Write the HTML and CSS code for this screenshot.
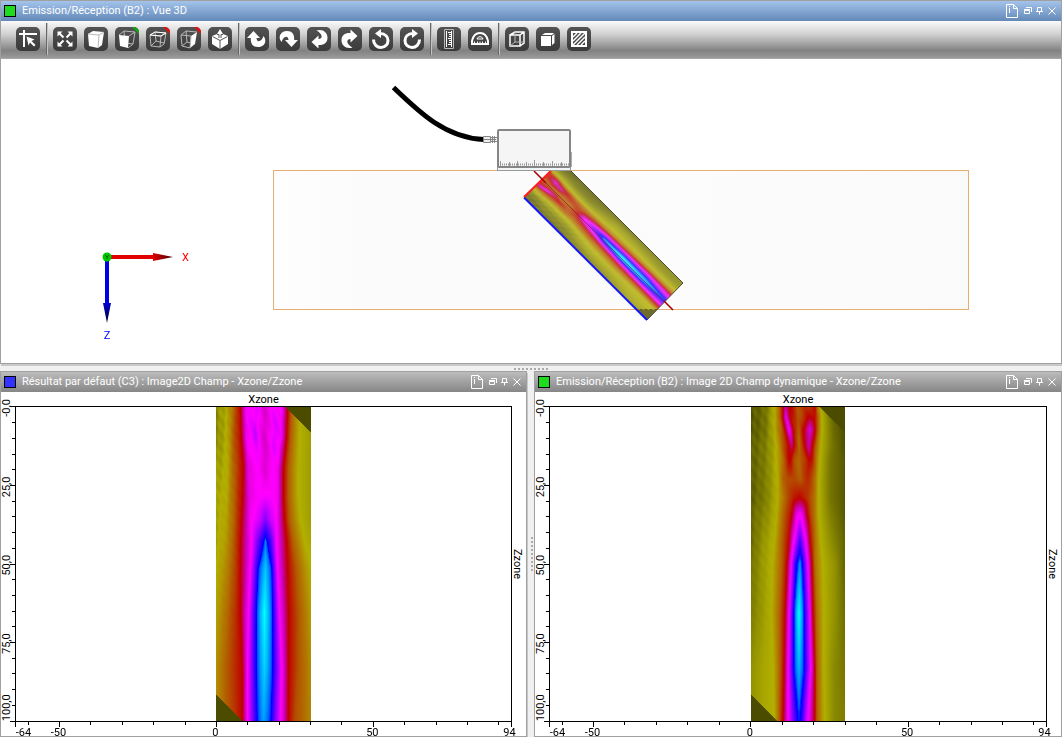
FILE: index.html
```html
<!DOCTYPE html>
<html lang="fr">
<head>
<meta charset="utf-8">
<title>Vue 3D</title>
<link rel="stylesheet" href="styles.css">
</head>
<body>
<svg class="defs" aria-hidden="true">
  <symbol id="w-info" viewBox="0 0 12 14"><path d="M.5.5h7l4 4v9H.5zM7.5.5v4h4M3.500 2v1M3.500 4v5"/></symbol>
  <symbol id="w-restore" viewBox="0 0 8 8"><path d="M.5 3.500h5v3h-5zM0 2.500h6M2 .5h5.500v4.500"/></symbol>
  <symbol id="w-pin" viewBox="0 0 8 8"><path d="M1.500.5h4v4h-4zM0 4.500h7M3.500 4.500v3"/></symbol>
  <symbol id="w-close" viewBox="0 0 8 8"><path d="M.5.5l7 7M7.500.5l-7 7"/></symbol>
</svg>
<main class="workspace">
  <section class="panel panel-scene">
    <header class="titlebar active">
      <span class="swatch green"></span><h1 class="title">Emission/Réception (B2) : Vue 3D</h1>
      <div class="controls">
        <button class="ctl info" aria-label="Info"><svg><use href="#w-info"/></svg></button>
        <button class="ctl" aria-label="Restaurer"><svg><use href="#w-restore"/></svg></button>
        <button class="ctl" aria-label="Épingler"><svg><use href="#w-pin"/></svg></button>
        <button class="ctl" aria-label="Fermer"><svg><use href="#w-close"/></svg></button>
      </div>
    </header>
    <div class="toolbar">
      <div class="group">
        <button class="tool" aria-label="Sélection"><svg viewBox="0 0 24 24"><path class="l2" d="M3 7h18M8 3v17"/><path class="f" d="M10.500 9.500l8 3-3 1.500 4 4-1.500 1.500-4-4-1.500 3z"/></svg></button>
      </div>
      <div class="group">
        <button class="tool" aria-label="Ajuster"><svg viewBox="0 0 24 24"><path class="l2" d="M6 6l4.500 4.500M18 6l-4.500 4.500M6 18l4.500-4.500M18 18l-4.500-4.500"/><path class="f" d="M4.500 4.500h5l-5 5zM19.500 4.500v5l-5-5zM4.500 19.500v-5l5 5zM19.500 19.500h-5l5-5z"/></svg></button>
        <button class="tool" aria-label="Vue pleine"><svg viewBox="0 0 24 24"><path class="f" d="M4 7l5-3 11 1-2 13-4 3-9-2z"/><path class="g" d="M4 7l11 1 5-3M15 8l-1 13"/></svg></button>
        <button class="tool" aria-label="Vue de face"><svg viewBox="0 0 24 24"><path class="corner-g" d="M17 0h4l3 3v4z"/><path class="g" d="M4 8l5-4 11 1-2 12-5 4M14 9l6-4M9 4l1 12 8 1"/><path class="f" d="M4 8l10 1-1 12-8-2z"/></svg></button>
        <button class="tool" aria-label="Vue de dessus"><svg viewBox="0 0 24 24"><path class="corner-r" d="M17 0h4l3 3v4z"/><path class="g" d="M4 8l11 1-1 11-9-1zM4 8l5-3 11 1-5 3M20 6l-2 11-4 3M9 5l1 9 8 2M10 14l-5 5"/><path class="l1" d="M4 8l5-3 11 1-5 3z"/></svg></button>
        <button class="tool" aria-label="Vue de côté"><svg viewBox="0 0 24 24"><path class="corner-r" d="M17 0h4l3 3v4z"/><path class="f" d="M14 9l6-4-2 12-5 4z"/><path class="g" d="M4 8l10 1-1 12-8-2zM4 8l5-4 11 1M9 4l1 11 4 1M10 15l-5 4"/></svg></button>
        <button class="tool" aria-label="Vue isométrique"><svg viewBox="0 0 24 24"><path class="f" d="M4 9l5-2 3-5 3 5 5 2v8l-8 5-8-5z"/><path class="d" d="M4.500 9.500l7.500 4 7.500-4M12 13.500V22M9 7.500h2V11M15 7.500h-2V11"/></svg></button>
      </div>
      <div class="group">
        <button class="tool" aria-label="Pivoter vers le haut"><svg viewBox="0 0 24 24"><path class="f" d="M2 11l6.500-7 6.500 7h-3.500c.4 5 5 4 7-2 4 5 1 11-5.500 11-5 0-7.500-3-7.200-9z"/></svg></button>
        <button class="tool" aria-label="Pivoter vers le bas"><svg viewBox="0 0 24 24"><path class="f" d="M22 13l-6.500 7L9 13h3.500c-.4-5-5-4-7 2-4-5-1-11 5.500-11 5 0 7.500 3 7.200 9z"/></svg></button>
        <button class="tool" aria-label="Pivoter à gauche"><svg viewBox="0 0 24 24"><path class="f" d="M11.500 21.500l-7-6.500 7-6.500V12c5-.4 4-5-2-8.500 6-2 11 2 11 7 0 5-3 7.700-9 7.500z"/></svg></button>
        <button class="tool" aria-label="Pivoter à droite"><svg viewBox="0 0 24 24"><path class="f" d="M12.500 2.500l7 6.500-7 6.500V12c-5 .4-4 5 2 8.500-6 2-11-2-11-7 0-5 3-7.700 9-7.500z"/></svg></button>
        <button class="tool" aria-label="Rotation antihoraire"><svg viewBox="0 0 24 24"><path class="l3" d="M11 6.500c11 0 10 14 1 14-4 0-7.500-3-7.500-8"/><path class="f" d="M12 2v9L6 6.500z"/></svg></button>
        <button class="tool" aria-label="Rotation horaire"><svg viewBox="0 0 24 24"><path class="l3" d="M13 6.500c-11 0-10 14-1 14 4 0 7.500-3 7.500-8"/><path class="f" d="M12 2v9l6-4.500z"/></svg></button>
      </div>
      <div class="group">
        <button class="tool" aria-label="Règle"><svg viewBox="0 0 24 24"><path class="g" d="M7.500 2.500h9v19h-9z"/><path class="l1" d="M9.500 4v16M14.500 4v16M11 5.500h3M12 7.500h2M12 9.500h2M11 11.500h3M12 13.500h2M12 15.500h2M11 17.500h3"/></svg></button>
        <button class="tool" aria-label="Rapporteur"><svg viewBox="0 0 24 24"><path class="l2" d="M4 17v-3c1-5 4-8 8-8s7 3 8 8v3z"/><path class="l1" d="M9 12c.5-3 5.500-3 6 0zM6.500 17v-2.500M9.500 17v-2.500M12 17v-2.500M14.500 17v-2.500M17.500 17v-2.500"/></svg></button>
      </div>
      <div class="group">
        <button class="tool" aria-label="Filaire"><svg viewBox="0 0 24 24"><path class="l1b" d="M5 8h10v11H5zM5 8l5-3h9v11l-4 3M15 8l4-3"/><path class="g" d="M10 5v10h9M10 15l-5 4"/></svg></button>
        <button class="tool" aria-label="Solide"><svg viewBox="0 0 24 24"><path class="f" d="M5 9h10v10H5zM6 8l3-2h9l-2 2zM16 9l2.500-2v9L16 18z"/></svg></button>
        <button class="tool" aria-label="Hachures"><svg viewBox="0 0 24 24"><path class="l2" d="M5 5h14v14H5z"/><path class="l1b" d="M6 10l4-4M6 14l8-8M6 18l12-12M10 18l8-8M14 18l4-4"/></svg></button>
      </div>
    </div>
    <div class="scene">
      <svg class="scene-svg" viewBox="1 59 1060 304">
        <defs>
          <linearGradient id="block"><stop offset="0" stop-color="#fefefe"/><stop offset=".15" stop-color="#fbfbfb"/><stop offset=".6" stop-color="#fcfcfc"/><stop offset="1" stop-color="#fafafa"/></linearGradient>
          <linearGradient id="red-cone"><stop offset="0" stop-color="#e00000"/><stop offset="1" stop-color="#400000"/></linearGradient>
          <linearGradient id="blue-cone" x2="0" y2="1"><stop offset="0" stop-color="#0000d0"/><stop offset="1" stop-color="#000030"/></linearGradient>
          <clipPath id="below-surface"><rect x="500" y="171" width="200" height="160"/></clipPath>
        </defs>
        <rect x="273.500" y="170.500" width="695" height="139" fill="url(#block)" stroke="#e6ad72"/>
        <g clip-path="url(#below-surface)">
          <foreignObject width="95" height="313" transform="matrix(.379 -.389 .393 .393 524 197)"><canvas class="beam" data-field="dynamic" width="95" height="313"></canvas></foreignObject>
        </g>
        <g fill="none">
          <path d="M571 171l112 112-36 37" stroke="#4b4a2b"/>
          <path d="M524 197.500l123 122.500" stroke="#1616ff" stroke-width="2"/>
          <path d="M524 197l27-26" stroke="#ff1c1c" stroke-width="2"/>
          <path d="M534 171l12 12M664 301l9 9" stroke="#a80000" stroke-width="1.500"/>
          <path d="M546 183l118 118" stroke="#801020" opacity=".6"/>
          <path d="M640 309.500h18" stroke="#5f5930" stroke-dasharray="2 3"/>
        </g>
        <path d="M393.500 87.500C420 113 446 138 484 139.500" fill="none" stroke="#000" stroke-width="5"/>
        <g stroke="#858585"><path d="M483.500 136.500h7v6h-7zM490.500 137.500h7v4h-7z" fill="#eee"/><path d="M484 139.500h12M492.500 136v7M494.500 136v7"/></g>
        <rect x="569" y="152" width="3" height="15" fill="#adadad"/>
        <rect x="497.500" y="166.500" width="73" height="4" fill="#f2f5f5" stroke="#999"/>
        <rect x="498" y="130" width="72" height="37" rx="1" fill="#f5f5f5" stroke="#858585" stroke-width="2"/>
        <g stroke="#999"><path d="M500 164.500h69" stroke-width="2" stroke-dasharray="1 1"/><path d="M500.500 161v5M517.500 161v5M534.500 160v6M552.500 161v5M509.500 162v4M526.500 162v4M543.500 162v4M561.500 162v4"/></g>
        <path d="M110 257h45" stroke="#e00000" stroke-width="4"/><path d="M153 253l20 4-20 4z" fill="url(#red-cone)"/>
        <path d="M107 260v44" stroke="#0000e8" stroke-width="4"/><path d="M103 303h8l-4 20z" fill="url(#blue-cone)"/>
        <circle cx="107" cy="257" r="4.500" fill="#00c800"/><path d="M105 255l2 2 2-2M107 257v2" fill="none" stroke="#006000"/>
        <text class="axis-x" x="185.500" y="261">X</text><text class="axis-z" x="107" y="339">Z</text>
      </svg>
    </div>
  </section>
  <div class="splitter horizontal"></div>
  <div class="results">
    <section class="panel">
      <header class="titlebar">
        <span class="swatch blue"></span><h2 class="title">Résultat par défaut (C3) : Image2D Champ - Xzone/Zzone</h2>
        <div class="controls">
          <button class="ctl info" aria-label="Info"><svg><use href="#w-info"/></svg></button>
          <button class="ctl" aria-label="Restaurer"><svg><use href="#w-restore"/></svg></button>
          <button class="ctl" aria-label="Épingler"><svg><use href="#w-pin"/></svg></button>
          <button class="ctl" aria-label="Fermer"><svg><use href="#w-close"/></svg></button>
        </div>
      </header>
      <div class="chart">
        <div class="name-x">Xzone</div>
        <svg class="scale-y"></svg>
        <div class="plot"><canvas class="map" data-field="static" width="95" height="313"></canvas></div>
        <div class="name-z">Zzone</div>
        <svg class="scale-x"></svg>
      </div>
    </section>
    <div class="splitter vertical"></div>
    <section class="panel">
      <header class="titlebar">
        <span class="swatch green"></span><h2 class="title">Emission/Réception (B2) : Image 2D Champ dynamique - Xzone/Zzone</h2>
        <div class="controls">
          <button class="ctl info" aria-label="Info"><svg><use href="#w-info"/></svg></button>
          <button class="ctl" aria-label="Restaurer"><svg><use href="#w-restore"/></svg></button>
          <button class="ctl" aria-label="Épingler"><svg><use href="#w-pin"/></svg></button>
          <button class="ctl" aria-label="Fermer"><svg><use href="#w-close"/></svg></button>
        </div>
      </header>
      <div class="chart">
        <div class="name-x">Xzone</div>
        <svg class="scale-y"></svg>
        <div class="plot"><canvas class="map" data-field="dynamic" width="95" height="313"></canvas></div>
        <div class="name-z">Zzone</div>
        <svg class="scale-x"></svg>
      </div>
    </section>
  </div>
</main>
<script src="app.js"></script>
</body>
</html>
```

FILE: styles.css
```css
*, ::before { box-sizing: border-box; }
body {
  margin: 0;
  background: #f0f0f0;
  color: #000;
  font: 11px/14px Tahoma, Roboto, "DejaVu Sans Condensed", sans-serif;
}
.defs { display: none; }
button { padding: 0; border: 0; background: none; color: inherit; }
.workspace {
  display: grid;
  grid-template-rows: minmax(0, 364fr) 7px minmax(0, 366fr);
  height: 100vh;
}
.results {
  display: grid;
  grid-template-columns: minmax(0, 527fr) 7px minmax(0, 528fr);
  min-height: 0;
}
.panel {
  display: flex;
  flex-direction: column;
  min-width: 0;
  min-height: 0;
  border: 1px solid #a0a0a0;
  background: #fff;
  box-shadow: 1px 2px 0 #c8c8c8;
}
.titlebar {
  display: flex;
  flex: none;
  align-items: center;
  height: 20px;
  padding: 0 5px 0 3px;
  background: linear-gradient(#bcbcbc, #868686);
  color: #fff;
}
.titlebar.active { background: linear-gradient(#a3c3ea, #6489b8); }
.swatch { width: 12px; height: 12px; border: 1px solid #000; }
.green { background: #1fdb1f; }
.blue { background: #3333ff; }
.title { flex: 1; margin: 0 0 0 6px; font-size: 11px; font-weight: 400; white-space: nowrap; }
.controls { display: flex; align-items: center; gap: 4px; }
.ctl { width: 8px; height: 8px; }
.ctl.info { width: 12px; height: 14px; margin-right: 2px; }
.ctl svg { display: block; width: 100%; height: 100%; fill: none; stroke: #fff; }
.toolbar {
  display: flex;
  flex: none;
  align-items: center;
  height: 38px;
  padding: 0 0 1px 15px;
  border-bottom: 1px solid #a8a8a8;
  background: linear-gradient(#fafafa, #d2d2d2 35%, #828282 80%, #9a9a9a);
}
.group { display: flex; align-items: center; gap: 7px; }
.group + .group { margin-left: 6px; }
.group + .group::before {
  width: 2px;
  height: 32px;
  margin-right: -2px;
  border-left: 1px solid #666;
  background: #c4c4c4;
  content: "";
}
.tool { width: 24px; height: 24px; border-radius: 5px; background: linear-gradient(#535353, #3a3a3a); overflow: hidden; }
.tool svg { display: block; width: 24px; height: 24px; fill: none; }
.f { fill: #fff; }
.g { stroke: #b8b8b8; }
.d { stroke: #555; }
.l1 { stroke: #fff; }
.l1b { stroke: #fff; stroke-width: 1.5; }
.l2 { stroke: #fff; stroke-width: 2; }
.l3 { stroke: #fff; stroke-width: 3; }
.corner-g { fill: #14a514; }
.corner-r { fill: #e01212; }
.scene { display: flex; flex: 1; min-height: 0; }
.scene-svg { width: 100%; height: 100%; }
.beam { display: block; opacity: .82; }
.axis-x { fill: #f00; text-anchor: middle; }
.axis-z { fill: #00f; text-anchor: middle; }
.splitter { display: flex; align-items: center; justify-content: center; }
.splitter::before {
  width: 34px;
  height: 2px;
  background: repeating-linear-gradient(90deg, #aaa 0 2px, transparent 2px 4px);
  content: "";
}
.splitter.horizontal { padding-top: 2px; }
.splitter.vertical { padding-left: 2px; }
.splitter.vertical::before {
  width: 2px;
  height: 34px;
  background: repeating-linear-gradient(#aaa 0 2px, transparent 2px 4px);
}
.chart {
  display: grid;
  flex: 1;
  grid-template-columns: 14px minmax(0, 1fr) 14px;
  grid-template-rows: 14px minmax(0, 1fr) 14px;
  min-height: 0;
}
.name-x { grid-area: 1 / 2; height: 14px; line-height: 16px; text-align: center; }
.scale-y { grid-area: 2 / 1; width: 14px; height: 100%; overflow: visible; }
.plot { grid-area: 2 / 2; display: flex; justify-content: center; border: 1px solid #000; }
.map { width: 19%; height: 100%; }
.name-z { grid-area: 2 / 3; padding-right: 3px; line-height: 12px; text-align: center; writing-mode: vertical-rl; }
.scale-x { grid-area: 3 / 2; width: 100%; height: 14px; overflow: visible; }
.scale-x line, .scale-y line { stroke: #000; shape-rendering: crispEdges; }
.scale-x text, .scale-y text { text-anchor: middle; }
```

FILE: app.js
```js
// Colour scale: the value of a cell is a position in this list.
const SCALE = [
  [76, 76, 0], [178, 176, 0], [178, 92, 0], [192, 0, 0], [200, 0, 176],
  [255, 0, 255], [128, 0, 255], [0, 0, 255], [0, 255, 255]
];

// Each profile is a depth, then pairs of position and value across the zone.
const FIELDS = {
  static: [
    [0, 0, .6, 10, 1, 18, 2, 24, 3, 30, 5, 40, 5.1, 48, 4.4, 56, 5, 65, 5, 71, 3, 75, 2, 84, 1, 95, .8],
    [30, 0, .6, 10, 1, 17, 2, 25, 3, 30, 4.8, 39, 5.4, 48, 4.3, 58, 5.3, 64, 5, 70, 3, 74, 2, 83, 1, 95, .8],
    [60, 0, .8, 10, 1, 18, 2, 27, 3, 32, 4.6, 42, 5, 49, 4.4, 56, 5, 61, 4.8, 67, 3, 72, 2, 82, 1, 95, .8],
    [90, 0, .9, 10, 1.1, 18, 2, 26, 3, 33, 4.6, 42, 5, 49, 5.1, 56, 5, 61, 4.8, 67, 3, 72, 2, 82, 1, 95, .8],
    [112, 0, .9, 10, 1.2, 18, 2, 25, 3, 34, 4.9, 44, 5.4, 49, 6, 54, 5.4, 60, 5, 68, 3, 73, 2, 84, 1, 95, .8],
    [133, 0, .9, 10, 1.3, 18, 2.1, 24, 3, 35, 5, 44, 6.5, 49, 7.2, 54, 6.5, 60, 5, 70, 3, 76, 2, 88, 1, 95, .9],
    [160, 0, 1, 10, 1.5, 18, 2.2, 24, 3, 34, 5, 42, 7, 49, 7.6, 55, 7, 61, 5, 71, 3, 80, 2, 91, 1.2, 95, 1],
    [205, 0, 1.2, 10, 1.8, 18, 2.4, 24, 3, 32, 5, 40, 7, 48, 8, 56, 7, 63, 5, 72, 3, 83, 2, 91, 1.5, 95, 1.2],
    [260, 0, 1.4, 10, 2, 18, 2.5, 26, 3, 31, 5, 40, 7, 48, 7.7, 56, 7, 65, 5, 72, 3, 82, 2.1, 90, 1.7, 95, 1.4],
    [313, 0, 1.4, 10, 2, 18, 2.4, 26, 3, 31, 5, 41, 7, 47, 7.4, 54, 7, 64, 5, 72, 3, 78, 2.2, 88, 1.8, 95, 1.5]
  ],
  dynamic: [
    [0, 0, .1, 14, .4, 23, 1, 29, 2, 32, 3, 34, 4.2, 38, 3.1, 46, 2.2, 53, 2.3, 59, 2.6, 64, 2.9, 66, 2, 70, 1, 80, .3, 95, 0],
    [10, 0, .1, 14, .4, 23, 1, 29, 2, 32, 3, 35, 4.8, 39, 3.1, 47, 2, 53, 2.6, 59, 3, 64, 3, 67, 2, 71, 1, 82, .3, 95, 0],
    [22, 0, .1, 14, .4, 23, 1, 30, 2, 34, 3, 38, 4.9, 42, 3.1, 48, 1.9, 53, 3.1, 59, 4.5, 64, 3, 67, 2, 71, 1, 83, .3, 95, 0],
    [38, 0, .2, 14, .5, 25, 1, 32, 2, 37, 3, 41, 3.7, 44, 2.6, 48, 1.9, 54, 3, 58, 4, 62, 3, 65, 2, 70, 1, 82, .4, 95, 0],
    [52, 0, .2, 14, .5, 25, 1, 33, 2, 38, 3, 40, 2.9, 43, 2.2, 48, 1.8, 54, 2.4, 58, 3, 61, 2.8, 64, 2, 69, 1, 80, .4, 95, .1],
    [72, 0, .2, 14, .5, 26, 1, 32, 1.9, 37, 2.2, 40, 2.2, 43, 2.2, 49, 2, 54, 2.4, 57, 2.5, 60, 2.3, 64, 1.8, 68, 1, 80, .4, 95, .1],
    [90, 0, .2, 14, .5, 26, 1, 33, 1.8, 38, 2.3, 41, 2.6, 44, 2.8, 49, 3, 54, 2.6, 57, 2.4, 60, 2.1, 64, 1.7, 68, 1, 80, .4, 95, .1],
    [106, 0, .3, 14, .6, 25, 1, 32, 1.9, 38, 2.6, 41, 3, 45, 4.5, 49, 5, 52, 4.5, 56, 3, 60, 2.2, 64, 1.7, 68, 1, 80, .5, 95, .1],
    [133, 0, .3, 14, .8, 23, 1, 31, 2, 38, 3, 42, 4.8, 46, 5.7, 49, 6.5, 52, 5.7, 55, 5, 59, 3, 64, 1.8, 70, 1, 82, .6, 95, .2],
    [155, 0, .4, 12, .8, 21, 1, 31, 2, 36, 3, 40, 5, 45, 6.8, 49, 7.3, 52, 6.8, 57, 5, 61, 3, 64, 1.8, 72, 1, 84, .7, 95, .2],
    [205, 0, .5, 12, .8, 20, 1, 29, 2, 34, 3, 38, 5, 43, 7, 48, 8, 53, 7, 59, 5, 62, 3, 66, 1.8, 73, 1, 84, .7, 95, .3],
    [260, 0, .7, 12, .9, 22, 1, 29, 2, 33, 3, 37, 5, 43, 7, 48, 7.5, 53, 7, 60, 5, 64, 3, 66, 2, 73, 1, 84, .6, 95, .4],
    [313, 0, .7, 12, .9, 23, 1, 28, 2, 32, 3, 37, 5, 46, 6.8, 48, 7, 50, 6.8, 57, 5, 64, 3, 66, 2, 74, 1, 84, .6, 95, .5]
  ]
};

const mix = (a, b, t) => a + (b - a) * t;

function profileAt(rows, y) {
  let i = 0;
  while (i < rows.length - 2 && rows[i + 1][0] < y) i++;
  const t = (y - rows[i][0]) / (rows[i + 1][0] - rows[i][0]);
  return rows[i].map((n, k) => mix(n, rows[i + 1][k], t));
}

function valueAt(p, x) {
  let k = 1;
  while (k < p.length - 4 && p[k + 2] < x) k += 2;
  return mix(p[k + 1], p[k + 3], (x - p[k]) / (p[k + 2] - p[k]));
}

function paint(canvas) {
  const w = canvas.width, h = canvas.height;
  const ctx = canvas.getContext("2d");
  const image = ctx.createImageData(w, h);
  for (let y = 0; y < h; y++) {
    const p = profileAt(FIELDS[canvas.dataset.field], y);
    for (let x = 0; x < w; x++) {
      let v = valueAt(p, x);
      // Round off the focal peak.
      if (v > 7) v = 7 + Math.pow(v - 7, .5);
      const fade = Math.max(0, 1 - x / 42) * Math.max(0, 1 - y / 260);
      v += fade * .16 * Math.sin(x * .7 - y * .2) * Math.sin(y * .25 + x * .1);
      if (y < 90 && x > 28 && x < 66) v += .14 * Math.sin(x * .5 - y * .2) * (1 - y / 90);
      if (x - y > 69 || y - x > 286) v = 0;
      v = Math.min(7.999, Math.max(0, v));
      const i = Math.floor(v), at = (y * w + x) * 4;
      for (let c = 0; c < 3; c++) image.data[at + c] = mix(SCALE[i][c], SCALE[i + 1][c], v - i);
      image.data[at + 3] = 255;
    }
  }
  ctx.putImageData(image, 0, 0);
}

function add(parent, name, attrs, text) {
  const el = document.createElementNS("http://www.w3.org/2000/svg", name);
  for (const key in attrs) el.setAttribute(key, attrs[key]);
  if (text) el.textContent = text;
  parent.appendChild(el);
  return el;
}

function drawDepthScale(svg) {
  for (let d = 0; d <= 100; d += 5) {
    const y = (d * .994 + .3) + "%";
    add(svg, "line", { x1: d % 25 ? 11 : 9, x2: 15, y1: y, y2: y });
  }
  [[0.6, "-0,0"], [25.6, "25,0"], [50.4, "50,0"], [75.2, "75,0"], [95.5, "100,0"]].forEach(([at, label]) => {
    const anchor = add(svg, "svg", { y: at + "%", overflow: "visible" });
    add(anchor, "text", { transform: "translate(9 0) rotate(-90)" }, label);
  });
}

function drawWidthScale(svg) {
  const at = n => ((n + 64) / 158 * 99.8 + .1) + "%";
  [-64, -60, -50, -40, -30, -20, -10, 0, 10, 20, 30, 40, 50, 60, 70, 80, 90, 94].forEach(n => {
    const major = n % 50 === 0 || n === -64 || n === 94;
    add(svg, "line", { x1: at(n), x2: at(n), y1: -1, y2: major ? 5 : 3 });
  });
  [[-64, 8], [-50, -1], [0, -1], [50, -1], [94, -2]].forEach(([n, dx]) => {
    add(svg, "text", { x: at(n), dx, y: 14 }, String(n));
  });
}

document.querySelectorAll("canvas").forEach(paint);
document.querySelectorAll(".scale-y").forEach(drawDepthScale);
document.querySelectorAll(".scale-x").forEach(drawWidthScale);
```
